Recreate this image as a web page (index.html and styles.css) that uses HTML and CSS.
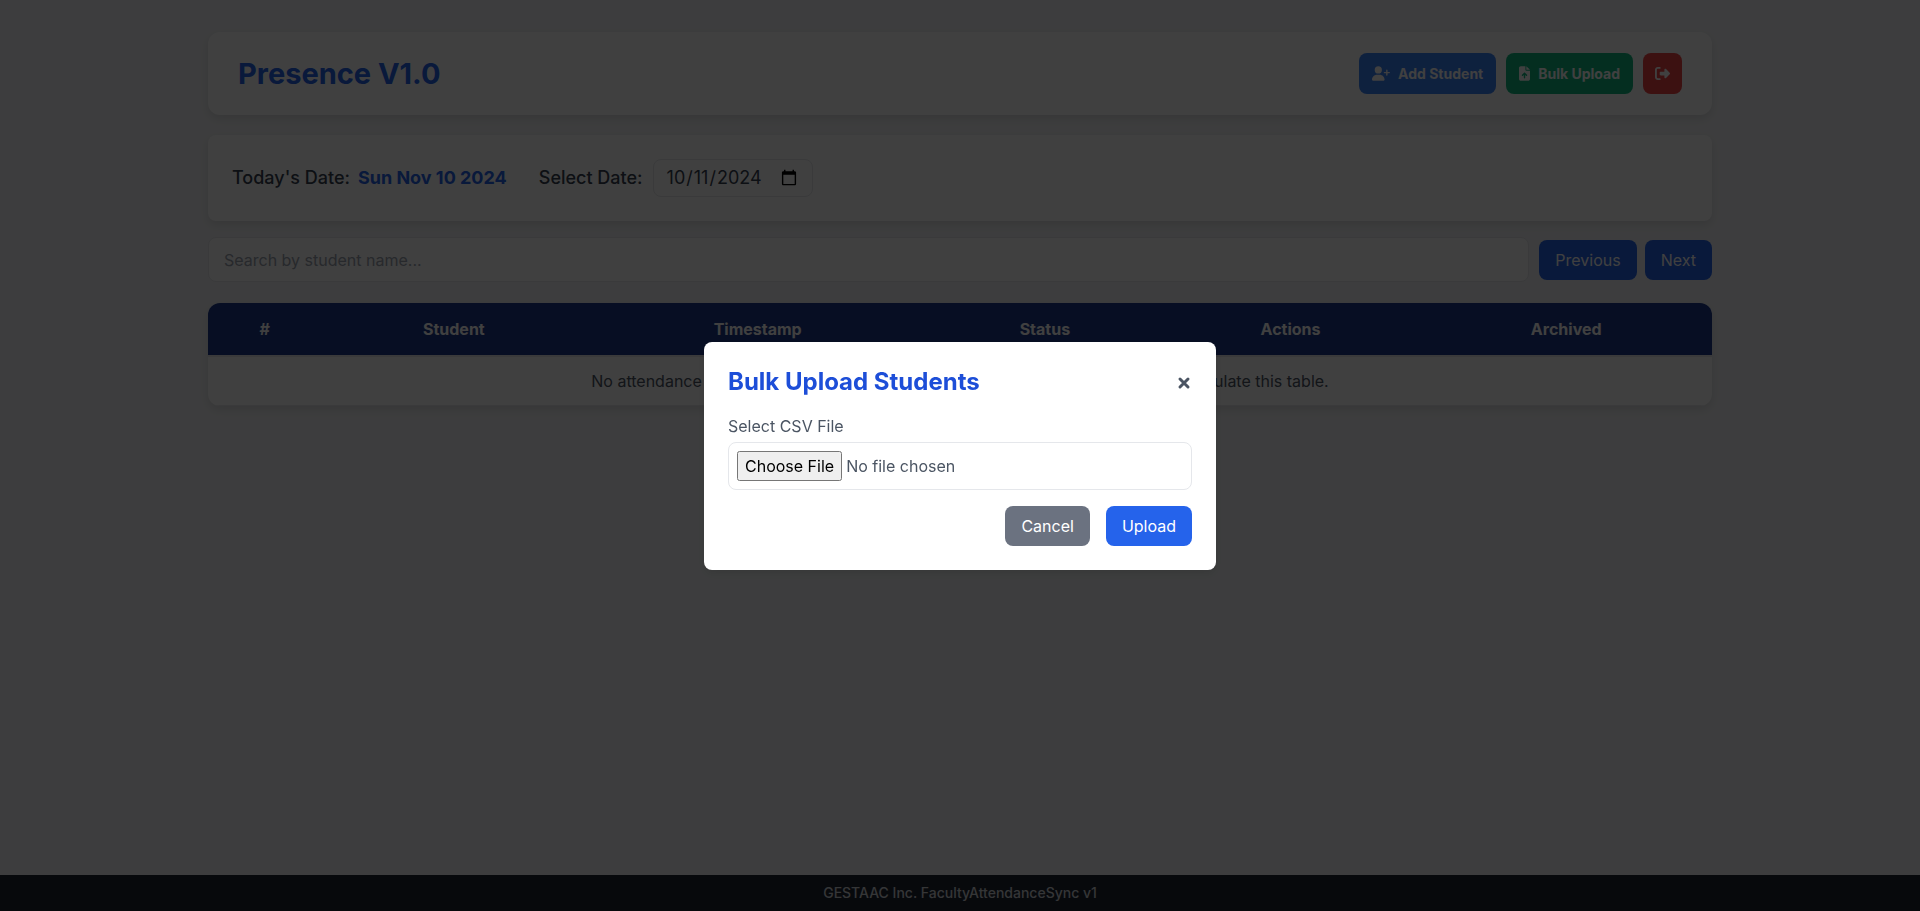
FILE: index.html
```html
<!DOCTYPE html>
<html lang="en">
<head>
<meta charset="utf-8">
<title>Presence V1.0</title>
<link rel="stylesheet" href="styles.css">
</head>
<body>
<main class="container">
  <header class="card header">
    <h1 class="brand">Presence V1.0</h1>
    <div class="header-actions">
      <button type="button" class="action action-add">
        <svg class="icon icon-wide" viewBox="0 0 640 512" aria-hidden="true"><path d="M96 128a128 128 0 1 1 256 0A128 128 0 1 1 96 128zM0 482.300C0 383.800 79.800 304 178.300 304h91.400C368.200 304 448 383.800 448 482.300c0 16.400-13.300 29.700-29.700 29.700H29.700C13.300 512 0 498.700 0 482.300zM504 312V248H440c-13.300 0-24-10.700-24-24s10.700-24 24-24h64V136c0-13.300 10.700-24 24-24s24 10.700 24 24v64h64c13.300 0 24 10.700 24 24s-10.700 24-24 24H552v64c0 13.300-10.700 24-24 24s-24-10.700-24-24z"/></svg>
        Add Student
      </button>
      <button type="button" class="action action-bulk">
        <svg class="icon icon-narrow" viewBox="0 0 384 512" aria-hidden="true"><path d="M64 0C28.700 0 0 28.700 0 64V448c0 35.300 28.700 64 64 64H320c35.300 0 64-28.700 64-64V160H256c-17.700 0-32-14.300-32-32V0H64zM256 0V128H384L256 0zM216 408c0 13.300-10.700 24-24 24s-24-10.700-24-24V305.900l-31 31c-9.400 9.400-24.600 9.400-33.900 0s-9.400-24.600 0-33.900l72-72c9.400-9.400 24.600-9.400 33.900 0l72 72c9.400 9.400 9.400 24.600 0 33.900s-24.600 9.400-33.900 0l-31-31V408z"/></svg>
        Bulk Upload
      </button>
      <button type="button" class="action action-logout" aria-label="Log out">
        <svg class="icon" viewBox="0 0 512 512" aria-hidden="true"><path d="M377.900 105.900L500.700 228.700c7.200 7.200 11.300 17.100 11.300 27.300s-4.100 20.100-11.300 27.300L377.900 406.100c-6.400 6.400-15 9.900-24 9.900c-18.700 0-33.900-15.200-33.900-33.900l0-62.100-128 0c-17.700 0-32-14.300-32-32l0-64c0-17.700 14.300-32 32-32l128 0 0-62.100c0-18.700 15.200-33.900 33.900-33.900c9 0 17.600 3.600 24 9.900zM160 96L96 96c-17.700 0-32 14.300-32 32l0 256c0 17.700 14.300 32 32 32l64 0c17.700 0 32 14.300 32 32s-14.300 32-32 32l-64 0c-53 0-96-43-96-96L0 128C0 75 43 32 96 32l64 0c17.700 0 32 14.300 32 32s-14.300 32-32 32z"/></svg>
      </button>
    </div>
  </header>

  <section class="card dates">
    <p class="today">Today's Date: <span class="today-value">Sun Nov 10 2024</span></p>
    <div class="picker">
      <label for="date">Select Date:</label>
      <input class="date-input" type="date" id="date" value="2024-10-11">
    </div>
  </section>

  <div class="toolbar">
    <input class="search" type="text" aria-label="Search by student name" placeholder="Search by student name...">
    <div class="pager">
      <button type="button" class="btn btn-nav">Previous</button>
      <button type="button" class="btn btn-nav">Next</button>
    </div>
  </div>

  <table class="records">
    <thead>
      <tr><th>#</th><th>Student</th><th>Timestamp</th><th>Status</th><th>Actions</th><th>Archived</th></tr>
    </thead>
    <tbody>
      <tr><td colspan="6">No attendance records available today. Please add a student or bulk upload to populate this table.</td></tr>
    </tbody>
  </table>
</main>

<footer class="footer">GESTAAC Inc. FacultyAttendanceSync v1</footer>

<div class="overlay">
  <form class="modal" role="dialog" aria-labelledby="modal-title">
    <div class="modal-head">
      <h2 class="modal-title" id="modal-title">Bulk Upload Students</h2>
      <button type="button" class="close" aria-label="Close">
        <svg class="close-icon" viewBox="0 0 14 14" aria-hidden="true"><path d="M3 3L11 11M11 3L3 11"/></svg>
      </button>
    </div>
    <label class="file-label" for="csv">Select CSV File</label>
    <input class="file-input" type="file" id="csv" accept=".csv">
    <div class="modal-actions">
      <button type="button" class="btn btn-cancel">Cancel</button>
      <button type="submit" class="btn btn-upload">Upload</button>
    </div>
  </form>
</div>
</body>
</html>
```

FILE: styles.css
```css
*, *::before, *::after {
  box-sizing: border-box;
}

body {
  margin: 0;
  min-height: 100vh;
  display: flex;
  flex-direction: column;
  background: #f3f4f6;
  color: #4b5563;
  font-family: Inter, sans-serif;
  font-size: 16px;
  line-height: 24px;
}

h1, h2, p {
  margin: 0;
}

button, input {
  font: inherit;
  color: inherit;
}

button {
  border: 0;
  cursor: pointer;
}

.container {
  flex: 1;
  width: 100%;
  max-width: 1536px;
  margin: 0 auto;
  padding: 32px 16px;
}

.card {
  background: #fff;
  border-radius: 12px;
  box-shadow: 0 4px 10px rgba(0, 0, 0, 0.1);
}

.header {
  display: flex;
  align-items: center;
  justify-content: space-between;
  padding: 21px 30px;
  margin-bottom: 20px;
}

.brand {
  font-size: 29px;
  line-height: 36px;
  font-weight: 700;
  color: #2563eb;
}

.header-actions {
  display: flex;
  gap: 10px;
}

.action {
  display: flex;
  align-items: center;
  gap: 8px;
  padding: 10px 13px;
  border-radius: 8px;
  color: #fff;
  font-size: 14px;
  line-height: 21px;
  font-weight: 700;
}

.action-add {
  background: #3b82f6;
}

.action-bulk {
  background: #10b981;
}

.action-logout {
  padding: 10px 12px;
  background: #ef4444;
}

.icon {
  width: 15px;
  height: 15px;
  fill: currentColor;
}

.icon-wide {
  width: 18px;
}

.icon-narrow {
  width: 11px;
}

.dates {
  display: flex;
  align-items: center;
  gap: 32px;
  padding: 24px;
  margin-bottom: 16px;
  border-radius: 8px;
  color: #374151;
  font-size: 18px;
  font-weight: 500;
}

.today, .picker {
  display: flex;
  align-items: center;
  gap: 8px;
}

.picker {
  gap: 10px;
}

.today-value {
  color: #2563eb;
  font-weight: 700;
}

.date-input {
  width: 160px;
  height: 38px;
  padding: 4px 12px;
  border: 1px solid #e5e7eb;
  border-radius: 8px;
  background: #fff;
  font-weight: 400;
}

.toolbar {
  display: flex;
  align-items: center;
  gap: 10px;
  margin-bottom: 21px;
}

.search {
  flex: 1;
  min-width: 0;
  height: 45px;
  padding: 10px 15px;
  border: 1px solid #e5e7eb;
  border-radius: 8px;
  background: #fff;
}

.search::placeholder {
  color: #9ca3af;
}

.pager {
  display: flex;
  gap: 8px;
}

.btn {
  padding: 8px 16px;
  border-radius: 8px;
  color: #fff;
}

.btn-nav, .btn-upload {
  background: #2563eb;
}

.btn-cancel {
  background: #6b7280;
}

.records {
  width: 100%;
  border-collapse: separate;
  border-spacing: 0;
  border-radius: 12px;
  overflow: hidden;
  background: #fff;
  box-shadow: 0 4px 10px rgba(0, 0, 0, 0.1);
  text-align: center;
}

.records th {
  padding: 14px;
  background: #1e3a8a;
  color: #fff;
  font-weight: 700;
}

.records td {
  padding: 12px 14px;
  border-top: 2px solid #e5e7eb;
  border-bottom: 1px solid #e5e7eb;
}

.footer {
  padding: 8px 16px;
  background: #1f2533;
  color: #d1d5db;
  font-size: 14px;
  line-height: 20px;
  font-weight: 500;
  text-align: center;
}

.overlay {
  position: fixed;
  inset: 0;
  display: flex;
  align-items: center;
  justify-content: center;
  background: rgba(0, 0, 0, 0.75);
}

.modal {
  width: 100%;
  max-width: 512px;
  padding: 24px;
  border-radius: 8px;
  background: #fff;
  box-shadow: 0 4px 10px rgba(0, 0, 0, 0.1);
}

.modal-head {
  display: flex;
  align-items: center;
  justify-content: space-between;
  margin-bottom: 16px;
}

.modal-title {
  font-size: 24px;
  line-height: 32px;
  font-weight: 700;
  color: #1d4ed8;
}

.close {
  display: flex;
  padding: 2px 1px 0;
  background: none;
}

.close-icon {
  width: 14px;
  height: 14px;
  fill: none;
  stroke: currentColor;
  stroke-width: 3;
  stroke-linecap: round;
}

.file-label {
  display: block;
  margin-bottom: 4px;
}

.file-input {
  display: block;
  width: 100%;
  padding: 8px;
  border: 1px solid #e5e7eb;
  border-radius: 8px;
}

.file-input::file-selector-button {
  height: 30px;
  font: inherit;
}

.modal-actions {
  display: flex;
  justify-content: flex-end;
  gap: 16px;
  margin-top: 16px;
}
```
